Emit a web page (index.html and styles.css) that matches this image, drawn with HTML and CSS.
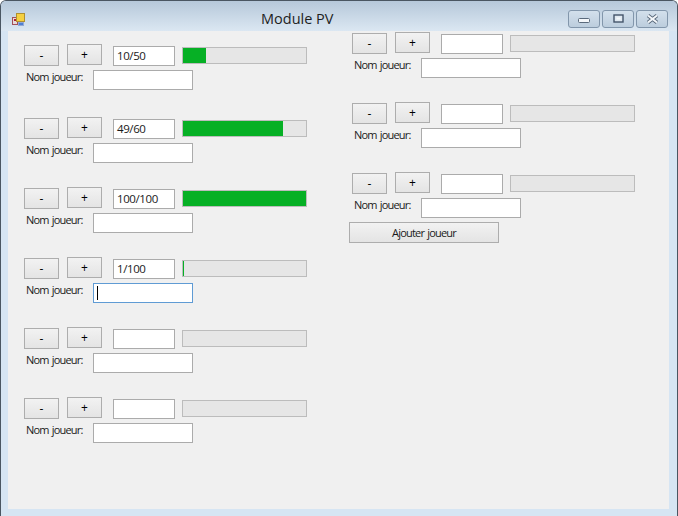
FILE: index.html
```html
<!DOCTYPE html>
<html lang="fr">
<head>
    <meta charset="UTF-8">
    <meta name="viewport" content="width=device-width, initial-scale=1.0">
    <title>Module PV</title>
    <link rel="stylesheet" href="styles.css">
</head>
<body>
    <div class="window">
        <header class="titlebar">
            <svg class="app-icon" width="14" height="14" viewBox="0 0 14 14">
                <rect x="0.5" y="4.5" width="5" height="7" fill="#e8d8d8" stroke="#a05058"/>
                <rect x="2" y="6" width="2" height="2" fill="#b02030"/>
                <rect x="4.5" y="0.5" width="8" height="8" fill="#f5d040" stroke="#b09030"/>
                <rect x="6.5" y="9.5" width="5" height="3" fill="#5080d0" stroke="#90a8d8"/>
            </svg>
            <h1 class="title">Module PV</h1>
            <div class="controls">
                <div class="ctl">
                    <svg width="12" height="8" viewBox="0 0 12 8"><rect x="0.5" y="3.5" width="11" height="4" rx="1" fill="#f4f7fa" stroke="#5a6a7c"/></svg>
                </div>
                <div class="ctl">
                    <svg width="11" height="9" viewBox="0 0 11 9"><rect x="1" y="1" width="9" height="7" fill="#dfe8f0" stroke="#44546a" stroke-width="1.4"/><rect x="3.5" y="3.5" width="4" height="2" fill="#f4f7fa"/></svg>
                </div>
                <div class="ctl">
                    <svg width="13" height="10" viewBox="0 0 13 10"><path d="M2 1.5 L11 8.5 M11 1.5 L2 8.5" stroke="#5a6a7c" stroke-width="3.8" fill="none"/><path d="M2 1.5 L11 8.5 M11 1.5 L2 8.5" stroke="#f4f7fa" stroke-width="2" fill="none"/></svg>
                </div>
            </div>
        </header>

        <main class="client">
            <section class="col col-left">
                <div class="player player-first">
                    <div class="stats">
                        <button class="btn btn-minus">-</button>
                        <button class="btn btn-plus">+</button>
                        <div class="field field-pv">10/50</div>
                        <div class="bar"><div class="fill" style="width: 19%"></div></div>
                    </div>
                    <div class="name-row">
                        <span class="label">Nom joueur:</span>
                        <div class="field field-name"></div>
                    </div>
                </div>
                <div class="player">
                    <div class="stats">
                        <button class="btn btn-minus">-</button>
                        <button class="btn btn-plus">+</button>
                        <div class="field field-pv">49/60</div>
                        <div class="bar"><div class="fill" style="width: 81.7%"></div></div>
                    </div>
                    <div class="name-row">
                        <span class="label">Nom joueur:</span>
                        <div class="field field-name"></div>
                    </div>
                </div>
                <div class="player">
                    <div class="stats">
                        <button class="btn btn-minus">-</button>
                        <button class="btn btn-plus">+</button>
                        <div class="field field-pv">100/100</div>
                        <div class="bar"><div class="fill" style="width: 100%"></div></div>
                    </div>
                    <div class="name-row">
                        <span class="label">Nom joueur:</span>
                        <div class="field field-name"></div>
                    </div>
                </div>
                <div class="player">
                    <div class="stats">
                        <button class="btn btn-minus">-</button>
                        <button class="btn btn-plus">+</button>
                        <div class="field field-pv">1/100</div>
                        <div class="bar"><div class="fill" style="width: 1px"></div></div>
                    </div>
                    <div class="name-row">
                        <span class="label">Nom joueur:</span>
                        <div class="field field-name focus"><span class="caret"></span></div>
                    </div>
                </div>
                <div class="player">
                    <div class="stats">
                        <button class="btn btn-minus">-</button>
                        <button class="btn btn-plus">+</button>
                        <div class="field field-pv"></div>
                        <div class="bar"></div>
                    </div>
                    <div class="name-row">
                        <span class="label">Nom joueur:</span>
                        <div class="field field-name"></div>
                    </div>
                </div>
                <div class="player">
                    <div class="stats">
                        <button class="btn btn-minus">-</button>
                        <button class="btn btn-plus">+</button>
                        <div class="field field-pv"></div>
                        <div class="bar"></div>
                    </div>
                    <div class="name-row">
                        <span class="label">Nom joueur:</span>
                        <div class="field field-name"></div>
                    </div>
                </div>
            </section>

            <section class="col col-right">
                <div class="player">
                    <div class="stats">
                        <button class="btn btn-minus">-</button>
                        <button class="btn btn-plus">+</button>
                        <div class="field field-pv"></div>
                        <div class="bar"></div>
                    </div>
                    <div class="name-row">
                        <span class="label">Nom joueur:</span>
                        <div class="field field-name"></div>
                    </div>
                </div>
                <div class="player">
                    <div class="stats">
                        <button class="btn btn-minus">-</button>
                        <button class="btn btn-plus">+</button>
                        <div class="field field-pv"></div>
                        <div class="bar"></div>
                    </div>
                    <div class="name-row">
                        <span class="label">Nom joueur:</span>
                        <div class="field field-name"></div>
                    </div>
                </div>
                <div class="player">
                    <div class="stats">
                        <button class="btn btn-minus">-</button>
                        <button class="btn btn-plus">+</button>
                        <div class="field field-pv"></div>
                        <div class="bar"></div>
                    </div>
                    <div class="name-row">
                        <span class="label">Nom joueur:</span>
                        <div class="field field-name"></div>
                    </div>
                </div>
                <button class="btn btn-add">Ajouter joueur</button>
            </section>
        </main>
    </div>
</body>
</html>
```

FILE: styles.css
```css
* {
    box-sizing: border-box;
}

body {
    margin: 0;
    background: #ffffff;
    font-family: "Open Sans", "Noto Sans", sans-serif;
    font-size: 11px;
    letter-spacing: -0.8px;
    word-spacing: 1px;
    color: #1a1a1a;
}

.window {
    width: 678px;
    height: 516px;
    display: flex;
    flex-direction: column;
    padding: 0 8px 7px 7px;
    background: #d6e5f3;
    border-top: 1px solid #4a5662;
    border-left: 1px solid #4a5662;
    border-right: 1px solid #4a5662;
    border-radius: 6px 6px 0 0;
    overflow: hidden;
}

.titlebar {
    height: 30px;
    flex: none;
    display: flex;
    align-items: center;
    position: relative;
    margin: 0 -8px 0 -7px;
    padding: 0 9px 0 11px;
    background: linear-gradient(#b6c8da, #dbe7f2);
}

.app-icon {
    margin-top: 7px;
}

.title {
    position: absolute;
    left: 260px;
    top: 8px;
    margin: 0;
    font-size: 14.5px;
    line-height: 20px;
    font-weight: 400;
    letter-spacing: 0;
    word-spacing: 0;
    color: #1e1e1e;
}

.controls {
    margin-left: auto;
    margin-top: 5px;
    display: flex;
    gap: 2px;
}

.ctl {
    width: 32px;
    height: 18px;
    display: flex;
    align-items: center;
    justify-content: center;
    border: 1px solid #8296ab;
    border-radius: 3px;
    background: linear-gradient(#d3e0ec, #bccddd);
}

.client {
    flex: 1;
    display: flex;
    background: #f0f0f0;
}

.col-left {
    width: 299px;
    padding: 13px 0 0 16px;
}

.col-right {
    padding: 1px 0 0 0;
    margin-left: 42px;
}

.col-right .player {
    margin-left: 3px;
}

.player + .player {
    margin-top: 24px;
}

.player-first {
    margin-bottom: 27px;
}

.stats {
    display: flex;
    align-items: flex-start;
    height: 26px;
}

.btn {
    padding: 0;
    font: inherit;
    letter-spacing: inherit;
    word-spacing: inherit;
    color: #1a1a1a;
    border: 1px solid #adadad;
    background: linear-gradient(#f2f2f2, #e4e4e4);
}

.btn-minus,
.btn-plus {
    width: 35px;
    height: 21px;
    font-size: 12px;
    letter-spacing: 0;
    color: #000000;
}

.btn-minus {
    margin-top: 1px;
}

.btn-plus {
    margin-left: 8px;
}

.field {
    height: 20px;
    background: #ffffff;
    border: 1px solid #ababab;
    line-height: 18px;
    padding-left: 3px;
    font-size: 11.5px;
    letter-spacing: -0.4px;
}

.field-pv {
    width: 62px;
    margin: 2px 0 0 11px;
}

.field-name {
    width: 100px;
    margin-left: 10px;
}

.focus {
    border-color: #5f9bd4;
    display: flex;
    align-items: center;
}

.caret {
    width: 1px;
    height: 14px;
    background: #000000;
}

.bar {
    width: 125px;
    height: 17px;
    margin: 3px 0 0 7px;
    background: #e6e6e6;
    border: 1px solid #bcbcbc;
}

.fill {
    height: 100%;
    background: #06b025;
}

.name-row {
    display: flex;
    align-items: flex-start;
}

.label {
    width: 57px;
    margin: -1px 0 0 2px;
    line-height: 15px;
    white-space: nowrap;
}

.btn-add {
    display: block;
    width: 150px;
    height: 21px;
    margin-top: 4px;
}
```
